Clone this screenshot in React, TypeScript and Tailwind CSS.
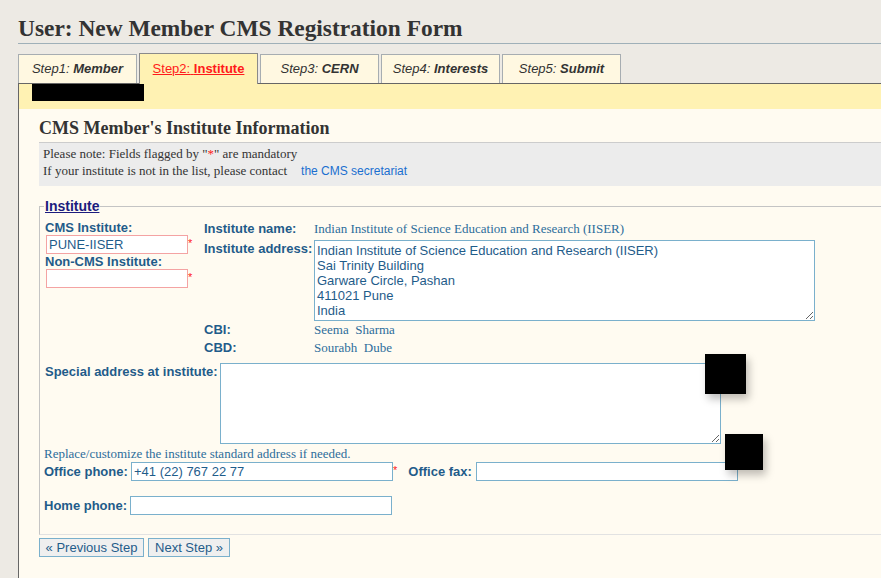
import React from 'react';

const steps = [
  { n: 'Step1:', label: 'Member' },
  { n: 'Step2:', label: 'Institute' },
  { n: 'Step3:', label: 'CERN' },
  { n: 'Step4:', label: 'Interests' },
  { n: 'Step5:', label: 'Submit' },
];

const address = [
  'Indian Institute of Science Education and Research (IISER)',
  'Sai Trinity Building',
  'Garware Circle, Pashan',
  '411021 Pune',
  'India',
].join('\n');

const Star = () => (
  <span className="self-start mt-[3px] text-[11px] leading-[11px] text-[#ff2020] font-['Liberation_Sans',Arial,sans-serif]">*</span>
);

const Label: React.FC<{ children: React.ReactNode; className?: string }> = ({ children, className }) => (
  <span className={`font-['Liberation_Sans',Arial,sans-serif] font-bold text-[13px] text-[#1f5c8a] ${className ?? ''}`}>
    {children}
  </span>
);

const App: React.FC = () => {
  return (
    <div className="relative w-full h-[578px] overflow-hidden bg-[#edeae4] font-['Liberation_Serif','Times_New_Roman',serif]">
      <div className="pl-[18px]">
        <h1 className="pt-[14px] pb-px h-[44px] leading-[28px] text-[23.4px] font-bold text-[#333] border-b border-[#9fb0b8] w-[1000px]">
          User: New Member CMS Registration Form
        </h1>

        {/* step tabs */}
        <div className="mt-[9px] flex items-end gap-[2px]">
          {steps.map((s, i) =>
            i === 1 ? (
              <div
                key={s.n}
                className="relative z-10 -mb-px w-[119px] h-[31px] border border-b-0 border-[#8a8a8a] bg-[#fff2b3] flex items-center justify-center font-['Liberation_Sans',Arial,sans-serif] text-[13px] text-[#ff1a1a] underline"
              >
                {s.n}&nbsp;<b>{s.label}</b>
              </div>
            ) : (
              <div
                key={s.n}
                className="w-[119px] h-[29px] border border-b-0 border-[#a7adb1] bg-[#fff8e1] flex items-center justify-center font-['Liberation_Sans',Arial,sans-serif] italic text-[13px] text-[#333]"
              >
                {s.n}&nbsp;<b>{s.label}</b>
              </div>
            )
          )}
        </div>

        {/* panel */}
        <div className="w-[1100px] h-[495px] border-l border-t border-[#666] bg-[#fffbf1]">
          <div className="h-[25px] bg-[#fff2b3]">
            <div className="ml-[13px] w-[112px] h-[17px] bg-black" />
          </div>

          <div className="pl-[20px]">
            <h2 className="mt-[8px] leading-[23px] text-[18px] font-bold text-[#333]">
              CMS Member's Institute Information
            </h2>

            <div className="mt-[2px] border-t border-[#cccccc] bg-[#ececec] pl-[4px] pt-[2px] pb-[6px] text-[13px] leading-[17px] text-[#333]">
              <div>
                Please note: Fields flagged by "<span className="text-[#ff2020]">*</span>" are mandatory
              </div>
              <div>
                If your institute is not in the list, please contact
                <a className="ml-[14px] font-['Liberation_Sans',Arial,sans-serif] text-[12px] text-[#1a6fd0]">
                  the CMS secretariat
                </a>
              </div>
            </div>

            <fieldset className="mt-[12px] border border-r-0 border-[#c4c4c4] border-b-[#e2e2e2] pl-[4px] pb-[19px]">
              <legend className="px-[1px] leading-[16px] font-['Liberation_Sans',Arial,sans-serif] font-bold text-[14px] text-[#1c1c7e] underline">
                Institute
              </legend>

              <div className="pt-[6px] pl-[1px] flex">
                {/* left column */}
                <div className="w-[159px] flex flex-col">
                  <Label className="leading-[15px]">CMS Institute:</Label>
                  <div className="flex">
                    <input
                      readOnly
                      defaultValue="PUNE-IISER"
                      className="ml-px w-[142px] h-[19px] border border-[#f4a3a3] bg-white pl-[2px] font-['Liberation_Sans',Arial,sans-serif] text-[13px] text-[#1f5c8a] outline-none"
                    />
                    <Star />
                  </div>
                  <Label className="leading-[15px]">Non-CMS Institute:</Label>
                  <div className="flex">
                    <input
                      readOnly
                      className="ml-px w-[142px] h-[19px] border border-[#f4a3a3] bg-white outline-none"
                    />
                    <Star />
                  </div>
                </div>

                {/* right column */}
                <div className="flex flex-col">
                  <div className="flex h-[20px] leading-[18px]">
                    <Label className="w-[110px]">Institute name:</Label>
                    <span className="text-[13px] text-[#2d6d9b]">
                      Indian Institute of Science Education and Research (IISER)
                    </span>
                  </div>
                  <div className="flex">
                    <Label className="w-[110px] leading-[15px] pt-px">Institute address:</Label>
                    <textarea
                      readOnly
                      defaultValue={address}
                      className="w-[501px] h-[81px] border border-[#7ab0cc] bg-white px-[2px] py-[2px] font-['Liberation_Sans',Arial,sans-serif] text-[13px] leading-[15px] text-[#1f5c8a] overflow-hidden outline-none"
                    />
                  </div>
                  <div className="flex h-[18px] leading-[18px]">
                    <Label className="w-[110px]">CBI:</Label>
                    <span className="text-[13px] text-[#2d6d9b] whitespace-pre">Seema  Sharma</span>
                  </div>
                  <div className="flex h-[18px] leading-[18px]">
                    <Label className="w-[110px]">CBD:</Label>
                    <span className="text-[13px] text-[#2d6d9b] whitespace-pre">Sourabh  Dube</span>
                  </div>
                </div>
              </div>

              <div className="mt-[6px] pl-[1px] flex gap-[2px]">
                <Label className="leading-[15px] pt-px">Special address at institute:</Label>
                <textarea
                  readOnly
                  className="w-[501px] h-[81px] border border-[#7ab0cc] bg-white overflow-hidden outline-none"
                />
              </div>

              <div className="mt-[2px] text-[13px] leading-[15px] text-[#2d6d9b]">
                Replace/customize the institute standard address if needed.
              </div>

              <div className="mt-px flex items-center">
                <Label className="w-[87px]">Office phone:</Label>
                <input
                  readOnly
                  defaultValue="+41 (22) 767 22 77"
                  className="w-[262px] h-[19px] border border-[#7ab0cc] bg-white pl-[2px] font-['Liberation_Sans',Arial,sans-serif] text-[13px] text-[#1f5c8a] outline-none"
                />
                <Star />
                <Label className="ml-[11px] w-[68px]">Office fax:</Label>
                <input readOnly className="w-[262px] h-[19px] border border-[#7ab0cc] bg-white outline-none" />
              </div>

              <div className="mt-[14px] flex items-center">
                <Label className="w-[86px]">Home phone:</Label>
                <input readOnly className="w-[262px] h-[19px] border border-[#7ab0cc] bg-white outline-none" />
              </div>
            </fieldset>

            <div className="mt-[3px] flex gap-[4px] font-['Liberation_Sans',Arial,sans-serif] text-[13px] text-[#1f5c8a]">
              <button className="h-[19px] w-[105px] border border-[#7ab0cc] bg-[#efefef] leading-[17px]">
                « Previous Step
              </button>
              <button className="h-[19px] w-[82px] border border-[#7ab0cc] bg-[#efefef] leading-[17px]">
                Next Step »
              </button>
            </div>
          </div>
        </div>
      </div>

      {/* redaction overlays */}
      <div className="absolute left-[705px] top-[354px] w-[41px] h-[40px] bg-black shadow-[3px_5px_8px_rgba(0,0,0,0.25)]" />
      <div className="absolute left-[725px] top-[434px] w-[38px] h-[36px] bg-black shadow-[3px_5px_8px_rgba(0,0,0,0.25)]" />
    </div>
  );
};

export default App;
